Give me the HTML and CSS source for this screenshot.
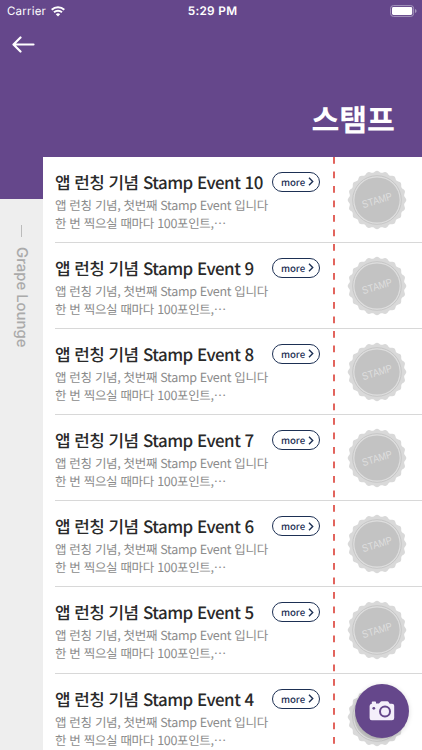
FILE: index.html
```
<!DOCTYPE html>
<html lang="ko">
<head>
    <meta charset="UTF-8">
    <meta name="viewport" content="width=device-width, initial-scale=1.0">
    <title>스탬프</title>
    <link rel="stylesheet" href="styles.css">
</head>
<body>
<div class="status-bar">
    <div class="carrier">
        <span>Carrier</span>
        <svg width="14" height="11" viewBox="0 0 14 11" fill="none" stroke="#fff" stroke-width="1.9">
            <path d="M.7 3.8a9 9 0 0 1 12.6 0M3 6.3a5.8 5.8 0 0 1 8 0"/>
            <path d="M4.8 8.2a3.2 3.2 0 0 1 4.4 0L7 10.5z" fill="#fff" stroke="none"/>
        </svg>
    </div>
    <div class="time">5:29 PM</div>
    <svg class="battery" width="27" height="12" viewBox="0 0 27 12">
        <rect x=".6" y=".6" width="23" height="10.8" rx="2.8" fill="none" stroke="#a598bd"/>
        <rect x="2" y="2" width="20.2" height="8" rx="1.4" fill="#fff"/>
        <path d="M25 4v4q1.6-.5 1.6-2T25 4z" fill="#a598bd"/>
    </svg>
</div>

<header>
    <a class="back" href="#">
        <svg width="24" height="18" viewBox="0 0 24 18" fill="none" stroke="#fff" stroke-width="2.2" stroke-linecap="round" stroke-linejoin="round">
            <path d="M21.500 9.500H2M8.500 2.500L1.500 9.500l7 7"/>
        </svg>
    </a>
    <h1>스탬프</h1>
</header>

<main>
    <aside><span class="bar"></span><span>Grape Lounge</span></aside>
    <div class="list" id="list"></div>
</main>

<button class="camera">
    <svg width="26" height="20" viewBox="0 0 26 20">
        <path d="M2.800 2V1.300Q2.800.5 3.600.5h2.600q.8 0 .8.800V2.600h3L11.600.7Q11.900.2 12.600.2h5.800q.7 0 1 .5l1.300 2h2.300q2.200 0 2.200 2V17q0 2.200-2.200 2.200H2.800Q.6 19.200.6 17V5q0-2 2.200-2.300z" fill="#f4effa"/>
        <circle cx="16" cy="10.600" r="5" fill="none" stroke="#65478b" stroke-width="2"/>
        <circle cx="4.800" cy="7.300" r="1.400" fill="#65478b"/>
    </svg>
</button>

<script>
    const list = document.getElementById("list");

    // Wavy outline of the stamp, 20 bumps round the edge
    let edge = "";
    for (let a = 0; a < 360; a += 2) {
        const t = a * Math.PI / 180;
        const r = 28.4 + 0.9 * Math.cos(t * 20);
        edge += (a ? "L" : "M") + (30 + r * Math.cos(t)).toFixed(2) + " " + (30 + r * Math.sin(t)).toFixed(2);
    }

    // Newest event first
    for (let i = 10; i >= 4; i--) {
        list.innerHTML += `
            <div class="row">
                <div class="info">
                    <div class="title">
                        <h2>앱 런칭 기념 Stamp Event ${i}</h2>
                        <a class="more" href="#">more
                            <svg width="6" height="9" viewBox="0 0 6 9" fill="none" stroke="#1d3054" stroke-width="1.4">
                                <path d="M1 .8l3.700 3.700L1 8.200"/>
                            </svg>
                        </a>
                    </div>
                    <p>앱 런칭 기념, 첫번째 Stamp Event 입니다<br>한 번 찍으실 때마다 100포인트,<span class="dots">⋯</span></p>
                </div>
                <svg class="stamp" width="60" height="60" viewBox="0 0 60 60">
                    <path d="${edge}z" fill="#d9d9d9"/>
                    <circle cx="30" cy="30" r="24.3" fill="#dedede" stroke="#c6c6c6"/>
                    <circle cx="30" cy="30" r="22.6" fill="#c3c3c3"/>
                    <text class="stamp-text" x="30" y="34" text-anchor="middle" textLength="31" lengthAdjust="spacingAndGlyphs" transform="rotate(-17 30 30)">STAMP</text>
                </svg>
            </div>`;
    }
</script>

</body>
</html>
```
FILE: styles.css
```
* {
    box-sizing: border-box;
}
body {
    font-family: "Noto Sans CJK KR", sans-serif;
    text-rendering: geometricPrecision;
    margin: 0;
    height: 750px;
    overflow: hidden;
    position: relative;
    background: linear-gradient(#65478b 199px, #eee 199px);
}
.status-bar {
    display: grid;
    grid-template-columns: 1fr auto 1fr;
    align-items: center;
    height: 22px;
    padding: 0 5px 0 7px;
    color: #fff;
    font-family: Inter, sans-serif;
    font-size: 11.5px;
}
.carrier {
    display: flex;
    align-items: center;
    gap: 5px;
    letter-spacing: 0.2px;
}
.time {
    padding-left: 1px;
    font-weight: 600;
    font-size: 11.8px;
    line-height: 14px;
    letter-spacing: 0.3px;
}
.battery {
    justify-self: end;
}
header {
    height: 134.5px;
    padding: 13px 27px 0 12px;
}
.back {
    display: block;
    height: 18px;
}
.back svg {
    display: block;
}
h1 {
    margin: 40px 0 0;
    color: #fff;
    font-size: 30.3px;
    font-weight: 700;
    line-height: 50px;
    text-align: right;
}
main {
    display: flex;
}
aside {
    width: 43px;
    padding-top: 68px;
    display: flex;
    flex-direction: column;
    align-items: center;
    gap: 10px;
    color: #aaa;
    font-family: Inter, sans-serif;
    font-size: 14.9px;
    font-weight: 500;
    line-height: 20px;
}
aside span {
    writing-mode: vertical-rl;
}
aside .bar {
    width: 1px;
    height: 12px;
    background: #bbb;
}
.list {
    position: relative;
    flex: 1;
    padding-left: 12px;
    background: #fff;
}
/* Perforated ticket line */
.list::after {
    content: "";
    position: absolute;
    top: 0;
    bottom: 0;
    left: 290px;
    width: 2px;
    background: linear-gradient(#e2645d 6.5px, transparent 6.5px) 0 0 / 1.5px 14.5px repeat-y;
}
.row {
    display: flex;
    justify-content: space-between;
    height: 86.2px;
    padding: 11px 15px 0 0;
    border-bottom: 1px solid #d8d8d8;
}
.title {
    display: flex;
    justify-content: space-between;
    align-items: center;
    width: 265px;
    height: 28px;
}
h2 {
    margin: 0;
    color: #292929;
    font-size: 16.9px;
    font-weight: 500;
    line-height: 28px;
    letter-spacing: -0.5px;
    white-space: nowrap;
}
.more {
    display: flex;
    flex: none;
    align-items: center;
    justify-content: center;
    gap: 3px;
    width: 48px;
    height: 20px;
    padding-left: 3px;
    border: 1.3px solid #1d3054;
    border-radius: 10px;
    color: #1d3054;
    font-size: 9.6px;
    font-weight: 500;
    text-decoration: none;
}
p {
    margin: 0;
    color: #8b8b8b;
    font-size: 12.5px;
    line-height: 18px;
    letter-spacing: -0.32px;
    white-space: nowrap;
}
.stamp {
    margin-top: 2px;
}
.stamp-text {
    fill: #dedede;
    font-family: "Liberation Sans", sans-serif;
    font-size: 10.5px;
}
.camera {
    position: absolute;
    right: 13px;
    bottom: 12px;
    width: 54px;
    height: 54px;
    padding: 0;
    border: none;
    border-radius: 50%;
    background: #65478b;
    box-shadow: 0 1px 5px rgba(0, 0, 0, 0.15);
    display: flex;
    align-items: center;
    justify-content: center;
}
```
